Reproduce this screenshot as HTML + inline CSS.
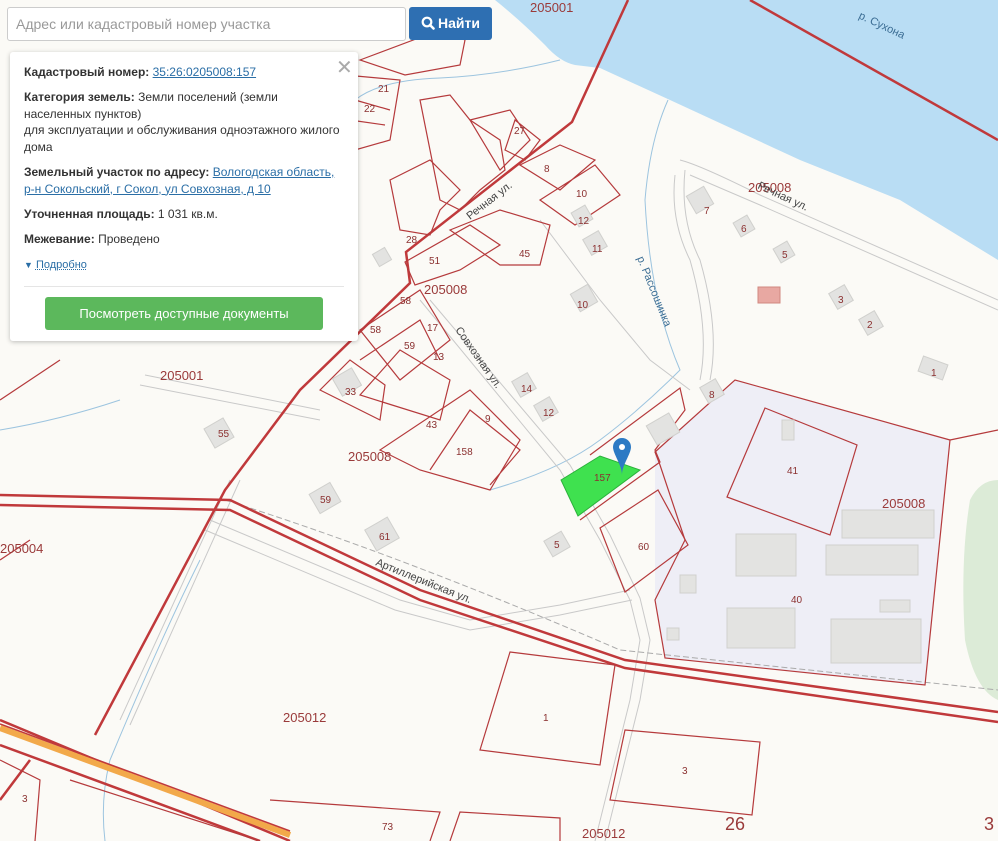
<!DOCTYPE html>
<html><head><meta charset="utf-8"><style>
body{margin:0;width:998px;height:841px;overflow:hidden;background:#fbfaf6;font-family:"Liberation Sans",sans-serif;position:relative}
svg{position:absolute;left:0;top:0}
.t{font-family:"Liberation Sans",sans-serif;fill:#8b3030;font-size:10px}
.q{font-family:"Liberation Sans",sans-serif;fill:#9a3a3a;font-size:13px}
.s{font-family:"Liberation Sans",sans-serif;fill:#444;font-size:11px}
#search{position:absolute;left:7px;top:7px;width:399px;height:34px;border:1px solid #ccc;border-radius:3px;background:#fff;box-sizing:border-box;font-size:14px;color:#999;line-height:32px;padding-left:8px}
#btn{position:absolute;left:409px;top:7px;width:83px;height:33px;background:#2e6fb2;border-radius:3px;color:#fff;font-size:14px;font-weight:bold;line-height:33px;text-align:center}
#btn svg{position:static;vertical-align:-2px;margin-right:3px}
#panel{position:absolute;left:10px;top:52px;width:348px;height:289px;background:#fff;border-radius:3px;box-shadow:0 1px 5px rgba(0,0,0,.25);font-size:12px;color:#333}
#panel p{margin:0;position:absolute;left:14px;line-height:16.5px;width:322px}
#panel b{color:#333}
#panel a{color:#2a6ea6;text-decoration:underline}
#close{position:absolute;left:326px;top:3px;font-size:20px;color:#aaa}
#hr{position:absolute;left:14px;top:234px;width:320px;border-top:1px solid #e5e5e5}
#doc{position:absolute;left:35px;top:245px;width:278px;height:33px;background:#5cb85c;border-radius:3px;color:#fff;font-size:13px;text-align:center;line-height:33px}
</style></head><body>
<svg width="998" height="841" viewBox="0 0 998 841">
<!-- river -->
<path d="M495 0 Q520 20 545 45 Q560 62 575 65 L600 68 L670 100 L800 160 L900 200 L998 260 L998 0 Z" fill="#b9ddf4"/>
<path d="M970 500 Q960 560 965 640 Q975 690 998 700 L998 480 Q980 480 970 500Z" fill="#dcebd7"/>
<!-- industrial -->
<path d="M655 452 L735 380 L950 440 L925 685 L665 658 L655 600Z" fill="#eeeef6"/>
<!-- streams -->
<g fill="none" stroke="#9cc4df" stroke-width="1">
<path d="M668 100 Q650 140 645 200 Q650 300 680 370 Q640 410 600 440 Q560 470 490 490"/>
<path d="M0 430 Q60 420 120 400 M200 560 Q160 640 110 760 Q100 800 105 841"/>
<path d="M560 60 Q500 75 440 78 Q380 80 355 100"/>
</g>
<!-- roads grey -->
<g fill="none" stroke="#c9c9c9" stroke-width="1">
<path d="M420 300 L560 470 L600 540 L630 600 L640 640 L630 700 L595 841"/>
<path d="M430 300 L570 465 L610 535 L640 598 L650 640 L640 700 L605 841"/>
<path d="M210 520 L400 600 L470 620 L560 605 L630 590"/>
<path d="M205 530 L395 610 L470 630 L560 615 L632 600"/>
<path d="M540 220 L600 300 L650 360 L690 390"/>
<path d="M680 160 Q700 165 760 195 L998 300 M675 175 Q670 220 690 260 Q710 330 700 380"/>
<path d="M685 170 Q680 220 700 260 Q720 330 710 380 M690 175 L760 205 L998 310"/>
<path d="M230 480 L120 720 M240 480 L130 725"/>
<path d="M145 375 L320 410 M140 385 L320 420"/>
<path d="M225 500 Q400 555 620 650 L998 690" stroke-dasharray="6 3" stroke="#aaa"/>
</g>
<!-- thick red -->
<g fill="none" stroke="#c0393b" stroke-width="2.5">
<path d="M628 0 L572 122 L406 252 L410 283 L300 390 L225 490 L95 735"/>
<path d="M0 495 L230 500 L420 590 L625 660 L998 712"/>
<path d="M0 505 L230 510 L420 600 L625 668 L998 722"/>
<path d="M750 0 L998 140"/>
<path d="M0 720 L290 841 M0 745 L260 841"/>
<path d="M30 760 L0 800"/>
</g>
<path d="M0 728 L290 835" stroke="#f2a94a" stroke-width="6" fill="none"/>
<path d="M0 724 L290 831" stroke="#c0393b" stroke-width="1.5" fill="none"/>
<!-- thin red parcels -->
<g fill="none" stroke="#b53a3c" stroke-width="1.2">
<path d="M655 452 L735 380 L950 440 L925 685 L665 658 L655 600 L685 540 L660 465 Z"/>
<path d="M950 440 L998 430"/>
<path d="M765 408 L857 445 L830 535 L727 497 Z"/>
<path d="M600 528 L658 490 L688 545 L625 592 Z"/>
<path d="M580 520 L660 462 L655 450 L685 410 L680 388 L590 455"/>
<path d="M510 652 L615 665 L600 765 L480 750 Z"/>
<path d="M625 730 L760 742 L752 815 L610 800 Z"/>
<path d="M270 800 L440 812 L430 841 M450 841 L460 812 L560 818 L560 841"/>
<path d="M0 760 L40 780 L35 841 M70 780 L260 841"/>
<path d="M360 395 L400 350 L450 380 L440 420 Z M320 390 L350 360 L385 385 L380 420 Z"/>
<path d="M380 450 L470 390 L520 440 L490 490 L420 470 Z M430 470 L470 410 L520 450 L490 485"/>
<path d="M360 330 L420 290 L450 340 L400 380 Z M360 360 L420 320 L440 360"/>
<path d="M405 262 L470 225 L500 245 L460 270 L415 285 Z M450 230 L500 210 L550 225 L540 265 L500 265 Z"/>
<path d="M390 180 L430 160 L460 190 L440 210 L430 235 L400 230 Z"/>
<path d="M420 100 L450 95 L470 120 L500 140 L505 170 L480 190 L460 210 L440 200 Z"/>
<path d="M470 120 L510 110 L530 140 L500 170 Z M515 120 L540 140 L525 160 L505 150 Z"/>
<path d="M520 165 L560 145 L595 160 L560 190 Z M540 200 L595 165 L620 195 L575 225 Z"/>
<path d="M360 60 L440 30 L465 40 L460 65 L405 75 Z M345 75 L400 80 L390 140 L355 150 Z M355 100 L390 110 M350 120 L385 125"/>
<path d="M0 400 L30 380 L60 360 M0 560 L30 540"/>
</g>
<!-- buildings -->
<g fill="#e3e3e1" stroke="#d0d0cd">
<rect x="690" y="190" width="20" height="20" transform="rotate(-30 700 200)"/>
<rect x="736" y="218" width="16" height="16" transform="rotate(-30 744 226)"/>
<rect x="776" y="244" width="16" height="16" transform="rotate(-30 784 252)"/>
<rect x="832" y="288" width="18" height="18" transform="rotate(-30 841 297)"/>
<rect x="862" y="314" width="18" height="18" transform="rotate(-30 871 323)"/>
<rect x="920" y="360" width="26" height="16" transform="rotate(20 933 368)"/>
<rect x="574" y="288" width="20" height="20" transform="rotate(-30 584 298)"/>
<rect x="586" y="234" width="18" height="18" transform="rotate(-30 595 243)"/>
<rect x="574" y="208" width="16" height="16" transform="rotate(-30 582 216)"/>
<rect x="515" y="376" width="18" height="18" transform="rotate(-30 524 385)"/>
<rect x="537" y="400" width="18" height="18" transform="rotate(-30 546 409)"/>
<rect x="703" y="382" width="18" height="18" transform="rotate(-30 712 391)"/>
<rect x="650" y="418" width="26" height="22" transform="rotate(-30 663 429)"/>
<rect x="547" y="535" width="20" height="18" transform="rotate(-30 557 544)"/>
<rect x="208" y="422" width="22" height="22" transform="rotate(-30 219 433)"/>
<rect x="313" y="487" width="24" height="22" transform="rotate(-30 325 498)"/>
<rect x="369" y="522" width="26" height="24" transform="rotate(-30 382 534)"/>
<rect x="336" y="372" width="22" height="20" transform="rotate(-30 347 382)"/>
<rect x="375" y="250" width="14" height="14" transform="rotate(-30 382 257)"/>
<rect x="736" y="534" width="60" height="42"/>
<rect x="727" y="608" width="68" height="40"/>
<rect x="831" y="619" width="90" height="44"/>
<rect x="842" y="510" width="92" height="28"/>
<rect x="826" y="545" width="92" height="30"/>
<rect x="880" y="600" width="30" height="12"/>
<rect x="782" y="420" width="12" height="20"/>
<rect x="680" y="575" width="16" height="18"/>
<rect x="667" y="628" width="12" height="12"/>
<rect x="758" y="287" width="22" height="16" fill="#e8a8a2" stroke="#d08880"/>
</g>
<!-- green parcel -->
<path d="M561 480 L600 456 L640 470 L578 516 Z" fill="#3fe14f" stroke="#2bb03b"/>
<path d="M622 438 a9 9 0 0 1 9 9 c0 7 -9 18 -9 28 c0 -10 -9 -21 -9 -28 a9 9 0 0 1 9 -9z" fill="#2c7ac4"/>
<circle cx="622" cy="447" r="3" fill="#fff"/>
<!-- labels -->
<g class="t">
<text x="594" y="481">157</text><text x="638" y="550">60</text><text x="787" y="474">41</text><text x="791" y="603">40</text>
<text x="543" y="721">1</text><text x="682" y="774">3</text><text x="382" y="830">73</text><text x="22" y="802">3</text>
<text x="554" y="548">5</text><text x="218" y="437">55</text><text x="320" y="503">59</text><text x="379" y="540">61</text>
<text x="345" y="395">33</text><text x="426" y="428">43</text><text x="456" y="455">158</text><text x="485" y="422">9</text>
<text x="370" y="333">58</text><text x="404" y="349">59</text><text x="427" y="331">17</text><text x="433" y="360">13</text><text x="400" y="304">58</text>
<text x="429" y="264">51</text><text x="519" y="257">45</text><text x="406" y="243">28</text>
<text x="544" y="172">8</text><text x="576" y="197">10</text><text x="578" y="224">12</text><text x="592" y="252">11</text><text x="577" y="308">10</text>
<text x="704" y="214">7</text><text x="741" y="232">6</text><text x="782" y="258">5</text><text x="838" y="303">3</text><text x="867" y="328">2</text><text x="931" y="376">1</text>
<text x="521" y="392">14</text><text x="543" y="416">12</text><text x="709" y="398">8</text>
<text x="378" y="92">21</text><text x="364" y="112">22</text><text x="514" y="134">27</text>
</g>
<g class="q">
<text x="424" y="294">205008</text><text x="882" y="508">205008</text><text x="748" y="192">205008</text>
<text x="348" y="461">205008</text><text x="160" y="380">205001</text><text x="530" y="12">205001</text>
<text x="0" y="553">205004</text><text x="283" y="722">205012</text><text x="582" y="838">205012</text>
<text x="725" y="830" style="font-size:18px">26</text><text x="984" y="830" style="font-size:18px">3</text>
</g>
<g class="s">
<text transform="translate(858 18) rotate(25)" fill="#3a6c93">р. Сухона</text>
<text transform="translate(757 188) rotate(25)">Речная ул.</text>
<text transform="translate(637 258) rotate(68)" fill="#3a6c93">р. Рассошинка</text>
<text transform="translate(455 330) rotate(55)">Совхозная ул.</text>
<text transform="translate(375 565) rotate(22)">Артиллерийская ул.</text>
<text transform="translate(470 220) rotate(-38)">Речная ул.</text>
</g>
</svg>
<div id="search">Адрес или кадастровый номер участка</div>
<div id="btn"><svg width="14" height="14" viewBox="0 0 14 14"><circle cx="6" cy="6" r="4.3" fill="none" stroke="#fff" stroke-width="2.2"/><path d="M9 9 L12.5 12.5" stroke="#fff" stroke-width="2.6" stroke-linecap="round"/></svg>Найти</div>
<div id="panel">
<div id="close">✕</div>
<p style="top:12px"><b>Кадастровый номер:</b> <a>35:26:0205008:157</a></p>
<p style="top:37px"><b>Категория земель:</b> Земли поселений (земли населенных пунктов)<br>для эксплуатации и обслуживания одноэтажного жилого дома</p>
<p style="top:112px"><b>Земельный участок по адресу:</b> <a>Вологодская область, р-н Сокольский, г Сокол, ул Совхозная, д 10</a></p>
<p style="top:154px"><b>Уточненная площадь:</b> 1 031 кв.м.</p>
<p style="top:179px"><b>Межевание:</b> Проведено</p>
<p style="top:205px;font-size:11px"><span style="color:#2a6ea6;font-size:9px">▼</span> <a style="text-decoration:underline dotted">Подробно</a></p>
<div id="hr"></div>
<div id="doc">Посмотреть доступные документы</div>
</div>
</body></html>
